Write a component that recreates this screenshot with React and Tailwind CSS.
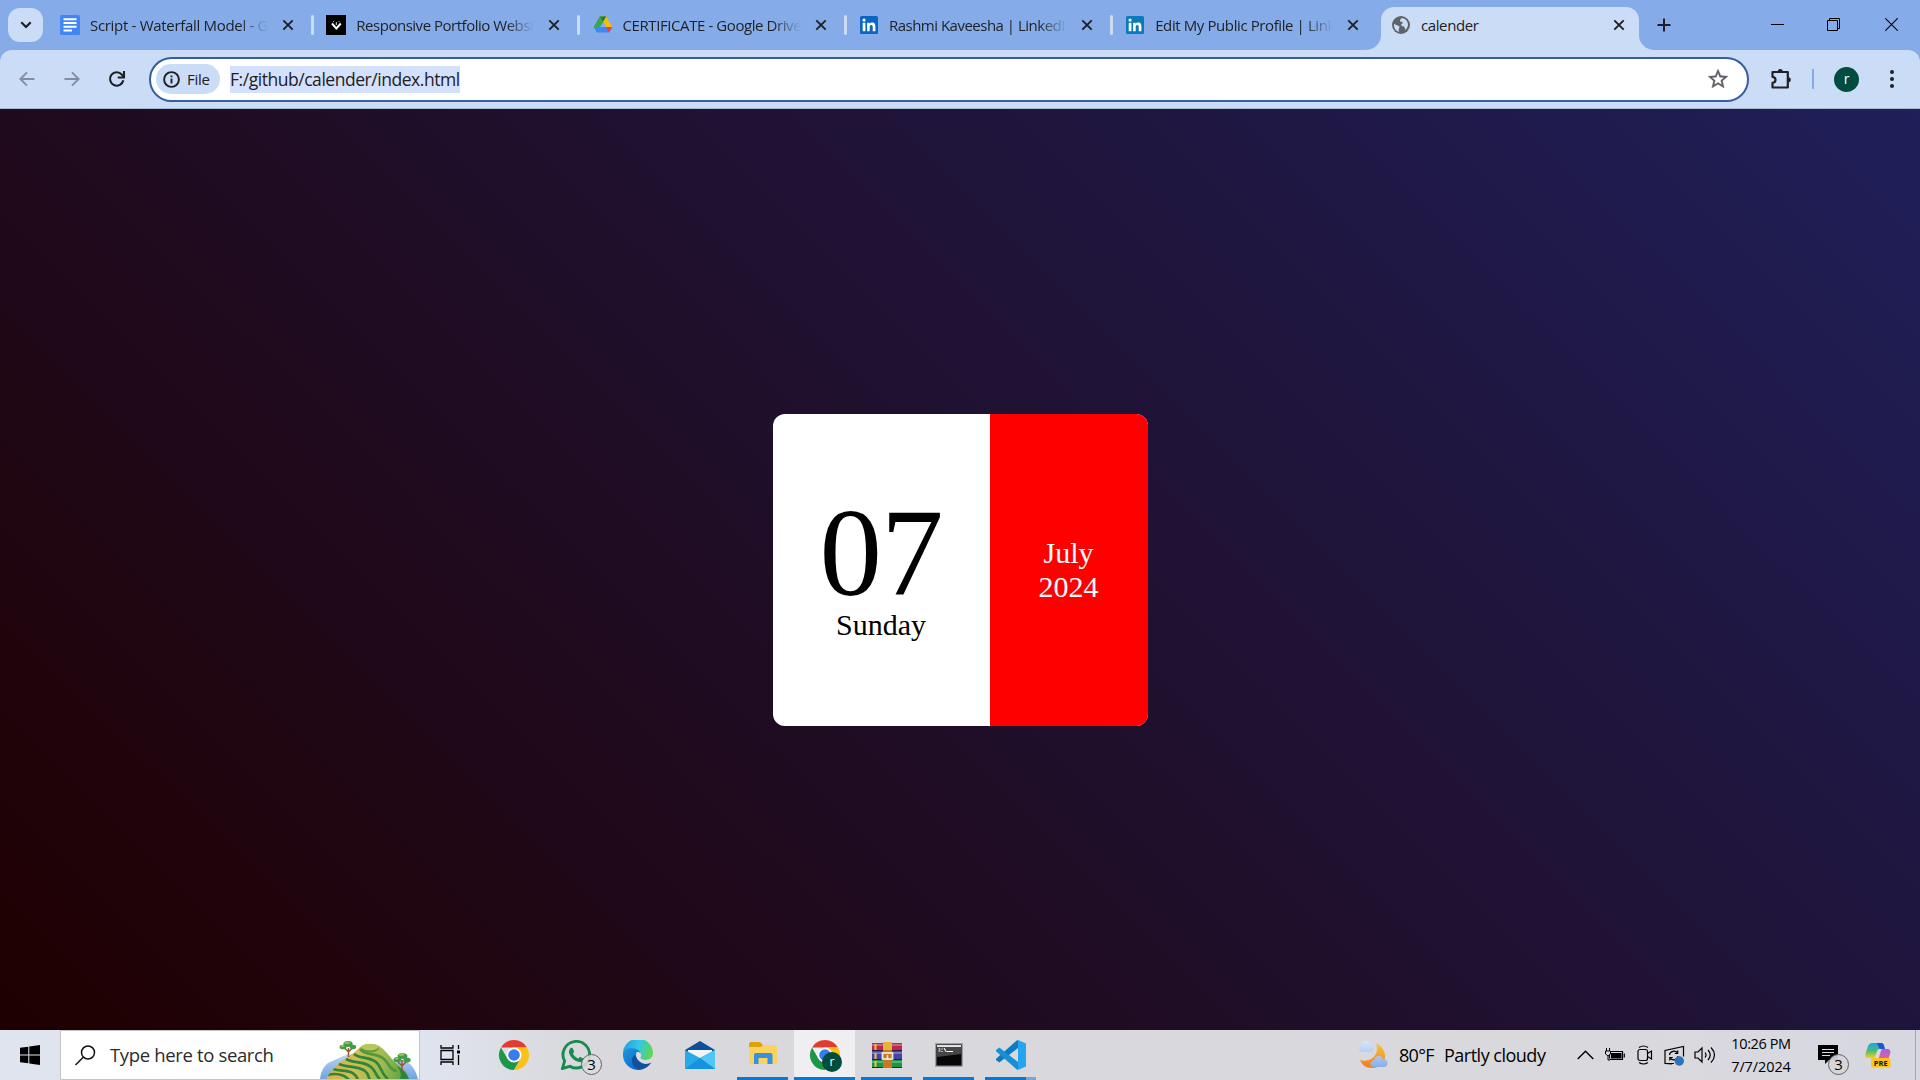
import React from "react";

const DOCS = (
  <svg width="20" height="20" viewBox="0 0 20 20"><rect width="20" height="20" rx="1.5" fill="#4285f4" /><path d="M3.5 4.2h13M3.500 8h13M3.500 11.800h13M3.500 15.600h8.500" stroke="#fff" strokeWidth="2" /></svg>
);
const PORTFOLIO = (
  <svg width="20" height="20" viewBox="0 0 20 20"><rect width="20" height="20" fill="#000" /><path d="M6 8.5 10.3 13.5 14.8 8.5" stroke="#fff" strokeWidth="2" fill="none" /><path d="M10.3 7v3M7.2 6.2l.8.8M13.4 6.2l-.8.8" stroke="#ddd" strokeWidth="1" /></svg>
);
const DRIVE = (
  <svg width="20" height="20" viewBox="0 0 20 20"><path d="M7 1.5h6.2L10 7 4.2 17.5 1 12z" fill="#188038" /><path d="M7 1.5 1 12l3.2 5.5L10.3 7z" fill="#34a853" /><path d="M7 1.5h6.2l6 10.5h-6z" fill="#fbbc04" /><path d="M7 1.5h6.2L10 7z" fill="#188038" /><path d="M1 12h18.2L16 17.5H4.2z" fill="#4285f4" /><path d="M13.2 12h6L16 17.5z" fill="#ea4335" /><path d="M10.100 7 13 12H7.200z" fill="#85abe9" /></svg>
);
function LinkedIn({ color }) {
  return (
    <svg width="20" height="20" viewBox="0 0 20 20"><rect x="1" y="1" width="18" height="18" rx="1.5" fill={color} /><path d="M3.7 7.8h2.7v8.4H3.7z" fill="#fff" /><circle cx="5.05" cy="5.1" r="1.6" fill="#fff" /><path d="M8.1 7.8h2.6v1.1c.5-.8 1.4-1.3 2.6-1.3 2.6 0 3.1 1.7 3.1 4v4.6h-2.7v-4.1c0-1 0-2.2-1.4-2.2s-1.6 1-1.6 2.1v4.2H8.1z" fill="#fff" /></svg>
  );
}

const TABS = [
  { title: "Script - Waterfall Model - Google", icon: DOCS, track: "tracking-[-0.31px]" },
  { title: "Responsive Portfolio Website", icon: PORTFOLIO, track: "tracking-[-0.48px]" },
  { title: "CERTIFICATE - Google Drive", icon: DRIVE, track: "tracking-[-0.42px]" },
  { title: "Rashmi Kaveesha | LinkedIn", icon: <LinkedIn color="#0a66c2" />, track: "tracking-[-0.5px]" },
  { title: "Edit My Public Profile | LinkedIn", icon: <LinkedIn color="#0a7bb8" />, track: "tracking-[-0.4px]" },
];

function CloseX() {
  return (
    <svg width="12" height="12" viewBox="0 0 12 12" className="shrink-0"><path d="M1.3 1.3 10.7 10.7M10.7 1.3 1.3 10.7" stroke="#1f2023" strokeWidth="1.9" /></svg>
  );
}

function Tab({ title, icon, track }) {
  return (
    <div className="flex h-[50px] w-[266.3px] shrink-0 items-center">
      <div className="h-5 w-5 shrink-0">{icon}</div>
      <div className={`ml-2.5 w-[178px] overflow-hidden whitespace-nowrap text-[15px] text-[#1f2023] [mask-image:linear-gradient(90deg,#000_84%,transparent)] ${track}`}>{title}</div>
      <div className="ml-[14px]"><CloseX /></div>
      <div className="ml-[17px] h-5 w-[3px] rounded bg-[#cbdcf6]" />
    </div>
  );
}

function TabStrip() {
  return (
    <header className="flex h-[50px] shrink-0 items-start bg-[#85abe9]">
      <div className="ml-2 mt-2 flex h-[34px] w-[35px] shrink-0 items-center justify-center rounded-[12px] bg-[#cbdcf6]">
        <svg width="12" height="8" viewBox="0 0 12 8"><path d="M1.3 1.3 6 6 10.7 1.3" stroke="#1f2023" strokeWidth="2.2" fill="none" /></svg>
      </div>
      <div className="ml-[17px] flex w-[1306px] shrink-0">
        {TABS.map((t, i) => (
          <div key={t.title} className={i === 4 ? "w-[240px] overflow-hidden" : ""}><Tab {...t} /></div>
        ))}
      </div>
      <div className="flex h-[50px] shrink-0 items-end">
        <svg width="15" height="15" viewBox="0 0 15 15"><path d="M15 0v15H0A15 15 0 0 0 15 0" fill="#cbdcf6" /></svg>
        <div className="flex h-[43px] w-[258px] items-center rounded-t-[13px] bg-[#cbdcf6] pb-[7px] pl-[11px]">
          <svg width="18" height="18" viewBox="0 0 18 18"><circle cx="9" cy="9" r="9" fill="#5f6368" /><path d="M2 7.8c2 1.7 5.2 1.5 5.5 3.3.2 1.2-1 1.4-.8 3.2l.6 1.5C4 15.3 1.7 12.500 2 7.800zM9.500 2c3.500.2 6.500 3 6.500 7-.3 2.200-1.300 3.800-2.700 5-.2-2-.6-3.300-2.300-3.800-1.500-.4-2-.9-1.600-2 .4-.9 1.400-.4 1.300-1.600C10.600 5.500 8 6.300 8 4.500 8 3.300 9 3 9.500 2z" fill="#cbdcf6" /></svg>
          <div className="ml-[11px] w-[192px] text-[15px] tracking-[-0.4px] text-[#1f2023]">calender</div>
          <CloseX />
        </div>
        <svg width="15" height="15" viewBox="0 0 15 15"><path d="M0 0v15h15A15 15 0 0 1 0 0" fill="#cbdcf6" /></svg>
      </div>
      <div className="ml-[3px] flex h-[50px] items-center">
        <svg width="14" height="14" viewBox="0 0 14 14"><path d="M7 .5v13M.5 7h13" stroke="#1f2023" strokeWidth="2" /></svg>
      </div>
      <div className="ml-auto mr-[22px] flex h-[49px] items-center">
        <svg width="13" height="13" viewBox="0 0 13 13"><path d="M0 6.500h13" stroke="#000" /></svg>
        <svg className="ml-[43px]" width="13" height="13" viewBox="0 0 13 13" fill="none" stroke="#000"><path d="M.5 2.500h10v10H.5zM2.500 2.500v-2h10v10h-2" /></svg>
        <svg className="ml-[45px]" width="13" height="13" viewBox="0 0 13 13"><path d="M.3.3l12.400 12.400M12.700.3.3 12.700" stroke="#000" strokeWidth="1.100" /></svg>
      </div>
    </header>
  );
}

function Toolbar() {
  return (
    <div className="h-[59px] shrink-0 bg-[#85abe9]">
      <div className="flex h-[59px] items-center rounded-t-[12px] border-b border-[#a9b9cf] bg-[#cbdcf6]">
        <svg className="ml-[19px]" width="16" height="16" viewBox="0 0 16 16" fill="none" stroke="#838da1" strokeWidth="1.900"><path d="M15.500 8H1.500M8 1.300 1.300 8 8 14.700" /></svg>
        <svg className="ml-[29px]" width="16" height="16" viewBox="0 0 16 16" fill="none" stroke="#838da1" strokeWidth="1.900"><path d="M.5 8h14M8 1.300 14.700 8 8 14.700" /></svg>
        <svg className="ml-[28px]" width="18" height="18" viewBox="0 0 18 18" fill="none" stroke="#1f2023" strokeWidth="2.100"><path d="M15.300 10.200A6.700 6.700 0 1 1 13.900 4.700L16 7" /><path d="M16 1v6.500H9.700" /></svg>
        <div className="ml-[23px] flex h-[45px] w-[1600px] items-center rounded-full border-[2.500px] border-[#355f9f] bg-white pl-[5px]">
          <div className="flex h-[30px] w-[64px] items-center rounded-full bg-[#cbdcf6] pl-[7px]">
            <svg width="17" height="17" viewBox="0 0 17 17" fill="none" stroke="#1f2023" strokeWidth="1.900"><circle cx="8.500" cy="8.500" r="7.400" /><path d="M8.500 7.600v4.900M8.500 4.500v1.800" /></svg>
            <span className="ml-[7px] text-[15px] font-medium tracking-[-0.3px] text-[#1f2023]">File</span>
          </div>
          <span className="ml-2.5 h-[27px] w-[230px] whitespace-nowrap bg-[#d3e1fd] text-[17.500px] leading-[27px] tracking-[-0.46px] text-[#1f2023]">F:/github/calender/index.html</span>
          <svg className="ml-auto mr-[17px]" width="24" height="24" viewBox="0 0 24 24" fill="#5b5e63" stroke="#5b5e63" strokeWidth=".3"><path d="M22 9.240l-7.190-.62L12 2 9.190 8.630 2 9.240l5.460 4.730L5.820 21 12 17.270 18.180 21l-1.630-7.030L22 9.240zM12 15.400l-3.760 2.270 1-4.280-3.320-2.880 4.380-.38L12 6.100l1.710 4.040 4.380.38-3.320 2.880 1 4.280L12 15.400z" /></svg>
        </div>
        <svg className="ml-[21px]" width="23" height="24" viewBox="0 0 23 24"><path d="M2.500 5h15.300v15.500H2.500v-4.600c2.600-.2 3-1.500 3-3.100s-.5-2.700-3-3z" fill="none" stroke="#1f2023" strokeWidth="2.200" strokeLinejoin="round" /><path d="M7.700 4.500a2.500 2.500 0 0 1 5 0zM18.300 10.300a2.500 2.500 0 0 1 0 5z" fill="#1f2023" /></svg>
        <div className="ml-[19px] h-5 w-0.5 bg-[#85abe9]" />
        <div className="ml-[20px] flex h-[25px] w-[25px] items-center justify-center rounded-full bg-[#004d40] text-[14px] leading-none text-white">r</div>
        <svg className="ml-[31px]" width="4" height="18" viewBox="0 0 4 18" fill="#1f2023"><circle cx="2" cy="2" r="2" /><circle cx="2" cy="9" r="2" /><circle cx="2" cy="16" r="2" /></svg>
      </div>
    </div>
  );
}

function CalendarPage() {
  return (
    <main className="flex min-h-0 flex-1 items-center justify-center bg-[linear-gradient(45deg,#1f0000,#1f1f59)] font-['Liberation_Serif',serif]">
      <section className="flex h-[312px] w-[375px] overflow-hidden rounded-[12px] bg-white">
        <div className="flex w-[217px] flex-col items-center justify-center pb-[6px] text-black">
          <span className="h-[117px] text-[125px] leading-[125px] tracking-[-1px]">07</span>
          <span className="text-[30px] leading-[34px]">Sunday</span>
        </div>
        <div className="flex w-[158px] flex-col items-center justify-center bg-[#ff0000] text-[30px] leading-[34px] text-white">
          <span>July</span>
          <span>2024</span>
        </div>
      </section>
    </main>
  );
}

function Island() {
  return (
    <svg width="99" height="38" viewBox="0 0 99 38">
      <defs>
        <linearGradient id="hill" x1="0" y1="0.400" x2="1" y2="0.500"><stop offset="0" stopColor="#cdb04f" /><stop offset="0.350" stopColor="#d2bd55" /><stop offset="0.650" stopColor="#9dbb4e" /><stop offset="1" stopColor="#3d9a3c" /></linearGradient>
        <linearGradient id="water" x1="0" y1="0" x2="0" y2="1"><stop offset="0" stopColor="#bcd6f1" /><stop offset="1" stopColor="#6fa5de" /></linearGradient>
        <clipPath id="hillShape"><path d="M6 38C10 31 14 28 17 24 22 19 30 15 36 10 41 5 43 3 50 3 57 3 60 5 64 9 70 15 73 20 79 25 84 29 87 32 89 38z" /></clipPath>
      </defs>
      <path d="M0 38C1 31 3 26 8 22L28 13 60 20 84 19c7 3 12 10 14 19z" fill="url(#water)" />
      <g clipPath="url(#hillShape)">
        <path d="M0 0h99v38H0z" fill="url(#hill)" />
        <g fill="none" stroke="#2f8439" strokeWidth="2.700">
          <path d="M40 8c4 6 13 4 21 8 8 4 8 14 16 14" stroke="#54963c" />
          <path d="M34 13c6 5 14 2 22 8 6 5 5 12 12 17" />
          <path d="M26 18c8 5 16 1 25 8 5 4 4 8 9 12" />
          <path d="M19 23c8 4 18 1 26 7 4 3 3 6 5 9" />
          <path d="M13 28c8 3 17 0 22 6 2 2 2 3 3 5" />
          <path d="M7 34c8-2 17-1 22 5" />
        </g>
        <path d="M77 25c6 3 10 7 12 13h-9c2-5 0-9-3-13z" fill="#2d8438" />
      </g>
      <ellipse cx="50" cy="6" rx="8.700" ry="3.200" fill="#b9c75a" /><path d="M41.300 6c2 4.500 15.400 4.500 17.400 0v2c-2 4.500-15.400 4.500-17.400 0z" fill="#5c9b41" />
      <path d="M28.500 16V7M28.500 11l-4-4M28.500 11l4-4M82 30V19M82 25l-4-4M82 25l4-4" stroke="#9a5a2c" strokeWidth="1.500" fill="none" />
      <g fill="#3f9c4c"><ellipse cx="23" cy="6" rx="3.500" ry="2.300" /><ellipse cx="28" cy="3" rx="4.700" ry="2.900" /><ellipse cx="33" cy="6" rx="3.200" ry="2.200" /><ellipse cx="77.500" cy="18.500" rx="4" ry="2.600" /><ellipse cx="82.500" cy="15" rx="5" ry="3" /><ellipse cx="87" cy="19" rx="3.700" ry="2.500" /></g>
      <g fill="#93c45c"><ellipse cx="27" cy="1.800" rx="3" ry="1.300" /><ellipse cx="22.500" cy="5" rx="2" ry="1" /><ellipse cx="81.500" cy="13.500" rx="3" ry="1.400" /><ellipse cx="76.500" cy="17.500" rx="2.200" ry="1.100" /></g>
    </svg>
  );
}

function Chrome({ avatar }) {
  return (
    <svg width="32" height="32" viewBox="-1 -1 32 32" overflow="visible">
      <path d="M8.500 18.750 2 7.500A15 15 0 0 0 15 30l6.500-11.250z" fill="#1e9648" />
      <path d="M2 7.500A15 15 0 0 1 28 7.500H15z" fill="#e33b2e" />
      <path d="M28 7.500A15 15 0 0 1 15 30l6.500-11.250L15 7.500z" fill="#fbc116" />
      <circle cx="15" cy="15" r="7.500" fill="#fff" /><circle cx="15" cy="15" r="5.800" fill="#3a7dea" />
      {avatar && <g><circle cx="22" cy="22" r="10" fill="#004d40" /><text x="22" y="26" fontSize="12" textAnchor="middle" fill="#fff">r</text></g>}
    </svg>
  );
}

function WhatsApp() {
  return (
    <div className="relative h-[30px] w-[30px]">
      <svg width="30" height="30" viewBox="0 0 30 30"><path d="M1.500 28.500 3.600 21A13.300 13.300 0 1 1 9 26.400z" fill="none" stroke="#178c50" strokeWidth="2.900" /><path d="M9.300 8.400c.8-1 2-.9 2.400-.1l1.400 3.100c.2.8-1.200 1.700-1.100 2.300.9 2.100 2.800 3.700 5 4.700.7.200 1.500-1.600 2.300-1.400l3 1.500c.9.500.3 2.300-.7 3-1.800 1.300-4.200.8-6.700-.4-3.400-1.800-5.900-4.700-6.800-8-.4-1.700.1-3.500 1.200-4.700z" fill="#178c50" /></svg>
      <div className="absolute left-[20px] top-[14px] flex h-[21px] w-[21px] items-center justify-center rounded-full border border-[#626262] bg-[#dcdcdee0] text-[15px] leading-none text-black">3</div>
    </div>
  );
}

function Edge() {
  return (
    <svg width="30" height="30" viewBox="0 0 30 30">
      <defs><linearGradient id="edgeTop" x1="0" y1="0.300" x2="1" y2="0.500"><stop stopColor="#279ddd" /><stop offset="0.500" stopColor="#31c8e8" /><stop offset="1" stopColor="#61d64e" /></linearGradient><linearGradient id="edgeLeft" x1="0" y1="0" x2="0.600" y2="1"><stop stopColor="#2295dc" /><stop offset="1" stopColor="#0a6dcc" /></linearGradient></defs>
      <path d="M0 14A15 15 0 0 1 30 13c0 4-3 7-7.500 7-4 0-6-1.500-5-3 1.800-2.600.5-6-4.500-6C7 11 3 14 0 14z" fill="url(#edgeTop)" />
      <path d="M0 14C1 9 6 7.500 11 8.500c4.500.8 7 3.500 6.800 7 0 0-2-2-4-1.500-5 2-4 10 3 15.800A15 15 0 0 1 0 14z" fill="url(#edgeLeft)" />
      <path d="M12.600 14.600c-7 4-3 14 4.200 15.300 5-.6 9-3 11.600-7.300-6 3-14 1-15.800-8z" fill="#12509e" />
      <path d="M13.300 12.500c3-1.500 6 1.500 4.200 4.500-1 1.600 1 3 4.500 3-4 2-9-.5-8.700-7.500z" fill="#dddde1" />
    </svg>
  );
}

function Mail() {
  return (
    <svg width="30" height="30" viewBox="0 0 30 30"><path d="M0 10 15 1l15 9v5H0z" fill="#0d4f9c" /><path d="M3 10h24v8l-11 7-13-9z" fill="#f4f4f4" /><path d="M0 10l15 8 15-8v19H0z" fill="#28a9ea" /><path d="M30 10v19L15 18z" fill="#4fc6f6" /><path d="M0 29 15 18l15 11z" fill="#1593df" /></svg>
  );
}
function Explorer() {
  return (
    <svg width="28" height="28" viewBox="0 0 28 28"><path d="M0 3c0-1 .6-2 2-2h9l3 3v4H0z" fill="#e0a106" /><path d="M0 6h12l2-2h12c1 0 2 .6 2 2v17H0z" fill="#fcd35e" /><path d="M5 23V14c0-1 .6-2 2-2h14.500c1.400 0 2 1 2 2v9h-5v-6h-9v6z" fill="#3692df" /></svg>
  );
}
function WinRar() {
  return (
    <svg width="30" height="28" viewBox="0 0 30 28"><path d="M0 2h30v8H0z" fill="#bd2850" /><path d="M0 10h30v9H0z" fill="#4543a8" /><path d="M0 19h30v8H0z" fill="#1c9443" /><path d="M0 4h30M0 12h30M0 21h30" stroke="#fff" strokeOpacity=".35" strokeWidth="1.500" /><path d="M0 9.500h30M0 18.500h30M0 26.500h30" stroke="#26203d" /><path d="M3.500 3v6M3.500 12v6M3.500 20v6" stroke="#efc440" strokeWidth="2" /><path d="M11 1h9v26h-9z" fill="#c8791f" /><path d="M11 1h9v8h-9z" fill="#e4b538" /><rect x="10.500" y="12" width="10" height="6" fill="none" stroke="#e5e5dd" strokeWidth="1.800" /><path d="M15.500 14v5" stroke="#eee" strokeWidth="1.500" /></svg>
  );
}
function Terminal() {
  return (
    <svg width="28" height="24" viewBox="0 0 28 24"><rect x=".7" y=".7" width="26.600" height="22.600" fill="#070707" stroke="#9da2a9" strokeWidth="1.400" /><path d="M2 2h24v2H2z" fill="#e1e2e6" /><path d="M2 4h24v7L2 14z" fill="#464646" /><path d="M3.500 6h2M3.500 8h2M7 5.500v1M7 8v1M9 5l2 3.500M11.500 8.500H18" stroke="#fff" strokeWidth="1.100" /></svg>
  );
}
function VsCode() {
  return (
    <svg width="30" height="30" viewBox="0 0 30 30"><path d="M22 0v8L3.300 22.500.3 20.300c-.5-.5-.5-1.200 0-1.700L20.500.8z" fill="#0a7bc4" /><path d="M22 30v-8L3.300 7.500.3 9.700c-.5.5-.5 1.200 0 1.700L20.500 29.200z" fill="#1590d4" /><path d="M22 0 30 3.500v23L22 30z" fill="#25a5ef" /></svg>
  );
}

function TaskItem({ width, bar, active, children }) {
  return (
    <div className={`flex h-[50px] shrink-0 flex-col items-center justify-between ${width} ${active ? "bg-[#efeff1]" : ""}`}>
      <div className="flex h-[47px] items-center pt-[3px]">{children}</div>
      {bar && <div className="h-[3px] w-full bg-[#0878d7]" />}
    </div>
  );
}

function Tray() {
  return (
    <div className="ml-auto flex h-[50px] shrink-0 items-center text-black">
      <svg width="32" height="30" viewBox="0 0 32 30">
        <defs><linearGradient id="moon" x1="0" y1="0" x2="0" y2="1"><stop stopColor="#f6c73d" /><stop offset="1" stopColor="#ef7c22" /></linearGradient><linearGradient id="cloud" x1="0" y1="0" x2="0" y2="1"><stop stopColor="#d8e7fb" /><stop offset="1" stopColor="#88aee9" /></linearGradient></defs>
        <path d="M19 3c14 7 11 25-4 25-6 0-10-3-12-8 11 3 20-5 16-17z" fill="url(#moon)" />
        <path d="M4 12a4 4 0 0 1 0-7 5 5 0 0 1 9-2c4 0 6 9 1 9zM16 27c-4-1-3-6 1-7 1-5 8-5 9-1 6 0 6 8 1 8z" fill="url(#cloud)" />
      </svg>
      <span className="ml-2.5 w-[45px] whitespace-nowrap text-[18px] tracking-[-0.7px]">80°F</span>
      <span className="w-[133px] whitespace-nowrap text-[18px] tracking-[-0.5px]">Partly cloudy</span>
      <svg width="17" height="10" viewBox="0 0 17 10"><path d="M.7 9 8.500 1.200 16.300 9" fill="none" stroke="#000" strokeWidth="1.400" /></svg>
      <svg className="ml-[11px]" width="20" height="16" viewBox="0 0 20 16"><path d="M4.500 4.500h13v8h-13zM19.300 6.500v4" fill="none" stroke="#000" strokeWidth="1.200" /><path d="M6 6h10.500v5.500H6z" /><path d="M1.500 1v3M4.500 1v3M.5 4h5v3l-2 1.500H2.500L.5 7zM3 8v5h2" fill="#dadade" stroke="#000" /></svg>
      <svg className="ml-[12px]" width="16" height="20" viewBox="0 0 16 20" fill="none" stroke="#000" strokeWidth="1.200"><rect x="1" y="4.500" width="9.500" height="11" rx="2" /><path d="M10.500 8.500 14.500 6v8l-4-2.500M2 2.500C5 .5 8 .5 11 2.500M2 17.500c3 2 6 2 9 0" /></svg>
      <svg className="ml-[11px]" width="21" height="21" viewBox="0 0 21 21" fill="none" stroke="#000" strokeWidth="1.200"><path d="M10 18.500H1v-13l18.500-4v10M1 18.500 8 19" /><path d="M5.500 10c.5-4 6-5 8-2M13.700 5.500V8.500h-3M14 11c-.5 4-5.500 5-8 2M5.800 15.500v-3h3" /><circle cx="15.300" cy="16" r="4.700" fill="#2d72bd" stroke="none" /></svg>
      <svg className="ml-[9px]" width="22" height="20" viewBox="0 0 22 20" fill="none" stroke="#000" strokeWidth="1.200"><path d="M1 7h3l4-4v14l-4-4H1zM11 7.500q2 2.500 0 5M14 5q4.500 5 0 10M17 2.500q7 7.500 0 15" /></svg>
      <div className="ml-[9px] w-[72px] whitespace-nowrap text-center text-[14.500px] leading-[23px] tracking-[-0.4px]"><div>10:26 PM</div><div className="tracking-[-0.1px]">7/7/2024</div></div>
      <div className="relative ml-[21px] h-[20px] w-[20px]">
        <svg width="20" height="20" viewBox="0 0 20 20"><path d="M0 0h20v15h-9l-4 4v-4H0z" /><path d="M4 4.500h12M4 7.500h12M4 10.500h8" stroke="#dedee2" strokeWidth="1.100" /></svg>
        <div className="absolute left-[10px] top-[9px] flex h-[21px] w-[21px] items-center justify-center rounded-full border border-[#626262] bg-[#d5d5d9ee] text-[15px] leading-none">3</div>
      </div>
      <svg className="ml-[27px]" width="26" height="26" viewBox="0 0 26 26">
        <defs><linearGradient id="copA" x1="0" y1="0" x2="0" y2="1"><stop stopColor="#19a9ee" /><stop offset=".5" stopColor="#4ab978" /><stop offset="1" stopColor="#f3ce27" /></linearGradient><linearGradient id="copB" x1="0" y1="0" x2="0" y2="1"><stop stopColor="#a261e6" /><stop offset="1" stopColor="#f55d8a" /></linearGradient></defs>
        <path d="M7 1h9c3 0 3 3 4 6h-5c-3 0-3 2-5 9H4c-4 0-4-3-3-6L3 4c1-2 2-3 4-3z" fill="url(#copA)" /><path d="M10 1h6c3 0 3 3 4 6h-5c-2-1-1-6-5-6z" fill="#2354cf" /><path d="M18 7h4c3 0 4 2 3 5l-2 6H11c2 0 3-2 4-6 1-3 1-5 3-5z" fill="url(#copB)" />
        <rect x="6" y="16" width="19.500" height="9.500" rx="1.500" fill="#fec711" /><text x="15.700" y="23.500" textAnchor="middle" fontSize="7.500" fontWeight="700" fill="#111">PRE</text>
      </svg>
      <div className="ml-[24px] mr-[4px] h-[50px] w-px bg-[#a4a4ad]" />
    </div>
  );
}

function Taskbar() {
  return (
    <footer className="flex h-[50px] shrink-0 items-center bg-[linear-gradient(90deg,#dfe4ee_0%,#dfe3ed_23%,#d9d9dd_30%,#d9d9dd_85%,#d7d7e1_100%)]">
      <svg className="ml-5" width="20" height="20" viewBox="0 0 20 20"><path d="M0 2.800 8.300 1.700v7.800H0zM9.300 1.500 20 0v9.500H9.300zM0 10.500h8.300v7.800L0 17.200zM9.300 10.500H20V20L9.300 18.500z" /></svg>
      <div className="ml-5 flex h-[50px] w-[360px] shrink-0 items-center border border-[#c5c5c8] bg-white pl-[14px]">
        <svg width="21" height="21" viewBox="0 0 21 21" fill="none" stroke="#111" strokeWidth="1.500"><circle cx="13" cy="7.500" r="6.500" /><path d="M8.200 12.300.5 20" /></svg>
        <span className="ml-[14px] whitespace-nowrap text-[18.500px] tracking-[-0.35px] text-[#2b2b2b]">Type here to search</span>
        <div className="ml-auto self-end"><Island /></div>
      </div>
      <svg className="ml-[20px]" width="22" height="20" viewBox="0 0 22 20" fill="none" stroke="#000" strokeWidth="1.300"><path d="M1 5.500h12v9H1zM1 0v3h12V0M1 20v-3h12v3M18.500 0v4M18.500 10v10" /><path d="M17 5.500h3v3h-3z" fill="#000" stroke="none" /></svg>
      <div className="ml-[21px] flex">
        <TaskItem width="w-[62px]"><Chrome /></TaskItem>
        <TaskItem width="w-[62px]"><WhatsApp /></TaskItem>
        <TaskItem width="w-[62px]"><Edge /></TaskItem>
        <TaskItem width="w-[62px]"><Mail /></TaskItem>
        <div className="ml-[6px] flex gap-[6px]">
          <TaskItem width="w-[51px]" bar><Explorer /></TaskItem>
          <TaskItem width="w-[61px]" bar active><Chrome avatar /></TaskItem>
          <TaskItem width="w-[51px]" bar><WinRar /></TaskItem>
        </div>
        <div className="ml-[11px]"><TaskItem width="w-[51px]" bar><Terminal /></TaskItem></div>
        <div className="ml-[11px] flex items-end"><div className="flex h-[50px] w-[51px] flex-col items-center justify-between"><div className="flex h-[47px] items-center pt-[3px]"><VsCode /></div><div className="flex h-[3px] w-full"><div className="w-[41px] bg-[#0878d7]" /><div className="w-[10px] bg-[#6aaae2]" /></div></div></div>
      </div>
      <Tray />
    </footer>
  );
}

export default function App() {
  return (
    <div className="flex h-screen w-screen flex-col overflow-hidden font-['Open_Sans',sans-serif]">
      <TabStrip />
      <Toolbar />
      <CalendarPage />
      <Taskbar />
    </div>
  );
}
